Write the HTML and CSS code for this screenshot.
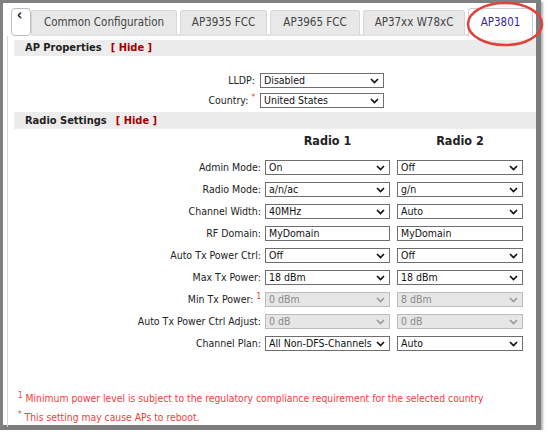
FILE: index.html
```html
<!DOCTYPE html>
<html>
<head>
<meta charset="utf-8">
<link rel="stylesheet" href="styles.css">
</head>
<body>
<div class="frame">
  <div class="tabbar">
    <div class="nav">&lsaquo;</div>
    <div class="tabs">
      <div class="tab t1">Common Configuration</div>
      <div class="tab t2">AP3935 FCC</div>
      <div class="tab t3">AP3965 FCC</div>
      <div class="tab t4">AP37xx W78xC</div>
      <div class="tab t5 active">AP3801</div>
    </div>
  </div>
  <div class="panel">
    <div class="section-h"><span class="title">AP Properties</span><span class="hide">[ Hide ]</span></div>
    <div class="grid ap">
      <div class="lbl">LLDP:</div>
      <div class="sel"><span>Disabled</span><svg class="chev" viewBox="0 0 9 6"><path d="M1 1 L4.5 4.5 L8 1"/></svg></div>
      <div class="lbl">Country: <sup class="req">*</sup></div>
      <div class="sel"><span>United States</span><svg class="chev" viewBox="0 0 9 6"><path d="M1 1 L4.5 4.5 L8 1"/></svg></div>
    </div>
    <div class="section-h second"><span class="title">Radio Settings</span><span class="hide">[ Hide ]</span></div>
    <div class="grid radio">
      <div></div>
      <div class="colh">Radio 1</div>
      <div class="colh">Radio 2</div>

      <div class="lbl">Admin Mode:</div>
      <div class="sel"><span>On</span><svg class="chev" viewBox="0 0 9 6"><path d="M1 1 L4.5 4.5 L8 1"/></svg></div>
      <div class="sel"><span>Off</span><svg class="chev" viewBox="0 0 9 6"><path d="M1 1 L4.5 4.5 L8 1"/></svg></div>

      <div class="lbl">Radio Mode:</div>
      <div class="sel"><span>a/n/ac</span><svg class="chev" viewBox="0 0 9 6"><path d="M1 1 L4.5 4.5 L8 1"/></svg></div>
      <div class="sel"><span>g/n</span><svg class="chev" viewBox="0 0 9 6"><path d="M1 1 L4.5 4.5 L8 1"/></svg></div>

      <div class="lbl">Channel Width:</div>
      <div class="sel"><span>40MHz</span><svg class="chev" viewBox="0 0 9 6"><path d="M1 1 L4.5 4.5 L8 1"/></svg></div>
      <div class="sel"><span>Auto</span><svg class="chev" viewBox="0 0 9 6"><path d="M1 1 L4.5 4.5 L8 1"/></svg></div>

      <div class="lbl">RF Domain:</div>
      <div class="sel txt"><span>MyDomain</span></div>
      <div class="sel txt"><span>MyDomain</span></div>

      <div class="lbl">Auto Tx Power Ctrl:</div>
      <div class="sel"><span>Off</span><svg class="chev" viewBox="0 0 9 6"><path d="M1 1 L4.5 4.5 L8 1"/></svg></div>
      <div class="sel"><span>Off</span><svg class="chev" viewBox="0 0 9 6"><path d="M1 1 L4.5 4.5 L8 1"/></svg></div>

      <div class="lbl">Max Tx Power:</div>
      <div class="sel"><span>18 dBm</span><svg class="chev" viewBox="0 0 9 6"><path d="M1 1 L4.5 4.5 L8 1"/></svg></div>
      <div class="sel"><span>18 dBm</span><svg class="chev" viewBox="0 0 9 6"><path d="M1 1 L4.5 4.5 L8 1"/></svg></div>

      <div class="lbl">Min Tx Power: <sup class="req">1</sup></div>
      <div class="sel dis"><span>0 dBm</span><svg class="chev" viewBox="0 0 9 6"><path d="M1 1 L4.5 4.5 L8 1"/></svg></div>
      <div class="sel dis"><span>8 dBm</span><svg class="chev" viewBox="0 0 9 6"><path d="M1 1 L4.5 4.5 L8 1"/></svg></div>

      <div class="lbl">Auto Tx Power Ctrl Adjust:</div>
      <div class="sel dis"><span>0 dB</span><svg class="chev" viewBox="0 0 9 6"><path d="M1 1 L4.5 4.5 L8 1"/></svg></div>
      <div class="sel dis"><span>0 dB</span><svg class="chev" viewBox="0 0 9 6"><path d="M1 1 L4.5 4.5 L8 1"/></svg></div>

      <div class="lbl">Channel Plan:</div>
      <div class="sel"><span>All Non-DFS-Channels</span><svg class="chev" viewBox="0 0 9 6"><path d="M1 1 L4.5 4.5 L8 1"/></svg></div>
      <div class="sel"><span>Auto</span><svg class="chev" viewBox="0 0 9 6"><path d="M1 1 L4.5 4.5 L8 1"/></svg></div>
    </div>
    <div class="notes">
      <div class="note"><sup>1</sup> Minimum power level is subject to the regulatory compliance requirement for the selected country</div>
      <div class="note"><sup>*</sup> This setting may cause APs to reboot.</div>
    </div>
  </div>
  <svg class="annot" width="90" height="52" viewBox="0 0 90 52"><ellipse cx="45" cy="25" rx="37" ry="21"/></svg>
</div>
</body>
</html>
```

FILE: styles.css
```css
* { box-sizing: border-box; }
html, body { margin: 0; padding: 0; background: #fff; }
body {
  font-family: "DejaVu Sans Condensed", "DejaVu Sans", sans-serif;
  font-stretch: condensed;
  font-size: 10.5px;
  color: #222;
}
.frame {
  position: relative;
  width: 541px;
  height: 430px;
  border-top: 3px solid #808080;
  border-left: 3px solid #808080;
  border-right: 5px solid #7c7c7c;
  border-bottom: 5px solid #7c7c7c;
  box-shadow: 2px 2px 2px rgba(0,0,0,0.3);
  background: #fff;
  display: flex;
  flex-direction: column;
}
.tabbar {
  display: flex;
  margin: 5px 0 0 8px;
  height: 28px;
}
.nav {
  flex: 0 0 20px;
  width: 20px;
  height: 28px;
  border: 1px solid #bdbdbd;
  border-radius: 4px;
  background: #fff;
  font-size: 15px;
  font-weight: bold;
  line-height: 13px;
  text-align: center;
  color: #222;
  padding-right: 3px;
}
.tabs {
  display: flex;
  align-items: flex-end;
  gap: 3px;
  flex: 1;
  border-bottom: 2px solid #e2e2e2;
  margin-right: 3px;
}
.tab {
  flex: 0 0 auto;
  height: 24px;
  background: #e8e8e8;
  border: 1px solid #d6d6d6;
  border-bottom: none;
  border-radius: 3px 3px 0 0;
  font-size: 11.5px;
  line-height: 23px;
  text-align: center;
  color: #444;
  white-space: nowrap;
}
.t1 { width: 146px; }
.t2 { width: 87px; }
.t3 { width: 90px; }
.t4 { width: 102px; }
.t5 { width: 65px; }
.tab.active {
  height: 28px;
  margin-bottom: -2px;
  background: #fff;
  color: #3a1fa8;
  line-height: 27px;
  border-color: #cfcfcf;
}
.panel {
  flex: 1;
  margin-left: 4px;
  border-left: 1px solid #d8d8d8;
  padding-top: 4px;
}
.section-h {
  margin-left: 6px;
  height: 16px;
  background: #ececec;
  padding-left: 11px;
  font-weight: bold;
  font-size: 11px;
  line-height: 16px;
  color: #222;
}
.section-h.second { height: 17px; line-height: 17px; margin-top: 4px; }
.hide { color: #a40000; margin-left: 9px; }
.grid { display: grid; margin-left: 6px; align-items: center; }
.ap {
  grid-template-columns: 241px 124px;
  column-gap: 5px;
  row-gap: 5px;
  margin-top: 17px;
  grid-auto-rows: 15px;
}
.radio {
  grid-template-columns: 244px 125px 126px;
  grid-template-rows: 22px;
  column-gap: 7px;
  row-gap: 7px;
  margin-top: 2px;
  grid-auto-rows: 15px;
}
.lbl {
  text-align: right;
  white-space: nowrap;
  color: #222;
  line-height: 15px;
}
.radio .lbl { margin-right: -3px; }
.req { color: #e33; font-size: 8px; vertical-align: 4px; line-height: 0; }
.colh {
  text-align: center;
  font-weight: bold;
  font-size: 12.5px;
  color: #222;
  line-height: 19px;
  align-self: start;
}
.sel {
  position: relative;
  height: 15px;
  border: 1px solid #6e6e6e;
  background: #fff;
  color: #111;
  padding-left: 3px;
  line-height: 13px;
  white-space: nowrap;
  overflow: hidden;
}
.sel span { display: block; overflow: hidden; margin-right: 16px; }
.sel.txt span { margin-right: 2px; }
.chev {
  position: absolute;
  right: 4px;
  top: 4px;
  width: 9px;
  height: 6px;
  fill: none;
  stroke: #111;
  stroke-width: 1.7;
}
.sel.dis { background: #e6e6e6; border-color: #bcbcbc; color: #8a8a8a; }
.sel.dis .chev { stroke: #9a9a9a; }
.notes { margin-top: 38px; margin-left: 10px; color: #f23c3c; font-size: 10.3px; }
.note { height: 19px; line-height: 19px; white-space: nowrap; }
.note sup { font-size: 8px; vertical-align: 4px; line-height: 0; }
.annot {
  position: absolute;
  left: 457px;
  top: -4px;
  overflow: visible;
}
.annot ellipse { fill: none; stroke: #e2403a; stroke-width: 2.5; }
```
